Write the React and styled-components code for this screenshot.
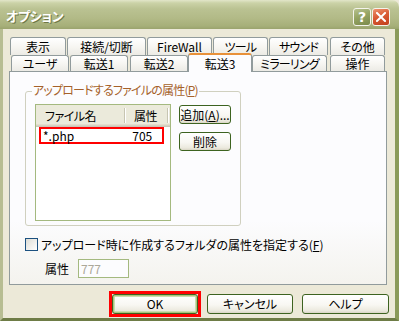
import React from 'react';
import styled, { createGlobalStyle } from 'styled-components';

const Global = createGlobalStyle`
  html, body { margin: 0; padding: 0; background: #ECE9D8; }
  * { box-sizing: border-box; }
`;

const FONT = `"Noto Sans CJK JP", "Noto Sans", sans-serif`;

const Window = styled.div`
  width: 399px;
  height: 321px;
  display: flex;
  flex-direction: column;
  overflow: hidden;
  background: #ECE9D8;
  font-family: ${FONT};
  font-size: 12px;
  line-height: 14px;
  color: #000;
  font-feature-settings: "palt" 1;
`;

const TitleBar = styled.div`
  flex: none;
  height: 29px;
  display: flex;
  align-items: center;
  padding: 0 9px 0 6px;
  border-radius: 0 7px 0 0;
  background: linear-gradient(180deg, #e2e6c9 0px, #cbd2a7 3px, #bac292 9px, #b2ba87 18px, #a6af79 26px, #9aa36d 29px);
`;

const TitleText = styled.span`
  flex: 1;
  margin-top: 2px;
  font-size: 13px;
  font-weight: bold;
  line-height: 16px;
  color: #fff;
  letter-spacing: -0.3px;
  text-shadow: 1px 1px 0 #6d7746;
`;

const CaptionButtons = styled.div`
  display: flex;
  gap: 1px;
  margin-top: 4px;
`;

const CaptionButton = styled.div`
  width: 18px;
  height: 18px;
  display: flex;
  align-items: center;
  justify-content: center;
  border: 1px solid #f4f4ec;
  border-radius: 3px;
  color: #fff;
  font-family: "DejaVu Sans", sans-serif;
  font-weight: bold;
  font-size: 14px;
  line-height: 14px;
  background: ${p => p.$close
    ? 'linear-gradient(160deg, #ee9470 0%, #d95b34 45%, #c2401d 100%)'
    : 'linear-gradient(160deg, #b7c28e 0%, #95a463 45%, #7b8a4b 100%)'};
`;

const Frame = styled.div`
  flex: 1;
  min-height: 0;
  display: flex;
  flex-direction: column;
  border-left: 3px solid #b7bd92;
  border-right: 4px solid #8a9a5a;
  border-bottom: 3px solid #6e7c46;
  background: #ECE9D8;
  padding: 8px 0 0 6px;
`;

const TabArea = styled.div`
  display: flex;
  flex-direction: column;
  margin-left: 1px;
`;

const TabRow = styled.div`
  display: flex;
  align-items: flex-end;
  height: ${p => p.$h}px;
  padding-left: ${p => p.$pl || 0}px;
`;

const Tab = styled.div`
  flex: none;
  width: ${p => p.$w}px;
  margin-left: ${p => p.$ml || 0}px;
  height: ${p => (p.$active ? '19px' : '100%')};
  margin-bottom: ${p => (p.$active ? '-1px' : '0')};
  position: ${p => (p.$active ? 'relative' : 'static')};
  z-index: ${p => (p.$active ? 2 : 'auto')};
  display: flex;
  align-items: center;
  justify-content: center;
  border: 1px solid #919B9C;
  border-bottom: none;
  border-top: ${p => (p.$active ? '2px solid #E8913A' : '1px solid #919B9C')};
  border-radius: 3px 3px 0 0;
  background: ${p => (p.$active ? '#FCFCFE' : 'linear-gradient(180deg, #ffffff 0%, #f7f6f2 50%, #ecebe5 100%)')};
  padding-top: ${p => (p.$active ? '0' : '1px')};
  letter-spacing: ${p => (p.$tight ? '-0.8px' : '0')};
  white-space: nowrap;
`;

const Panel = styled.div`
  width: 378px;
  height: 214px;
  flex: none;
  border: 1px solid #919B9C;
  background: linear-gradient(180deg, #FCFCFE 0%, #FCFCFE 70%, #F4F3EE 100%);
  display: flex;
  flex-direction: column;
  padding: 19px 0 0 15px;
`;

const Group = styled.div`
  position: relative;
  width: 216px;
  height: 135px;
  border: 1px solid #D0D0BF;
  border-radius: 3px;
  padding: 12px 9px 0 9px;
  display: flex;
  gap: 8px;
`;

const GroupCaption = styled.span`
  position: absolute;
  top: -9px;
  left: 6px;
  padding: 0 1px;
  background: #FCFCFE;
  color: #A5612A;
  letter-spacing: -0.8px;
  white-space: nowrap;
`;

const ListView = styled.div`
  width: 136px;
  height: 117px;
  flex: none;
  border: 1px solid #A4B97F;
  background: #fff;
  display: flex;
  flex-direction: column;
`;

const Header = styled.div`
  height: 22px;
  display: flex;
  align-items: center;
  background: #EBEADB;
  box-shadow: inset 0 -1px #CBC7B8, inset 0 -2px #D6D2C2, inset 0 -3px #E2DECD;
`;

const HeaderCell = styled.div`
  width: ${p => p.$w}px;
  padding-left: ${p => p.$pl}px;
  padding-bottom: 1px;
  letter-spacing: -0.5px;
  white-space: nowrap;
`;

const Divider = styled.span`
  width: 2px;
  height: 15px;
  border-left: 1px solid #C7C5B2;
  border-right: 1px solid #fff;
  margin-bottom: 1px;
`;

const Row = styled.div`
  display: flex;
  align-items: center;
  width: 125px;
  height: 17px;
  margin-left: 3px;
  border: 2px solid #ff0000;
  padding-left: 2px;
`;

const Cell = styled.span`
  width: ${p => p.$w}px;
  white-space: nowrap;
`;

const SideButtons = styled.div`
  display: flex;
  flex-direction: column;
  gap: 8px;
  margin-top: 1px;
`;

const Button = styled.button`
  flex: none;
  width: ${p => p.$w}px;
  height: ${p => p.$h}px;
  padding: 0;
  border: 1px solid #3d6320;
  border-radius: 3px;
  background: linear-gradient(180deg, #ffffff 0%, #f8f7f2 55%, #ebe9dd 88%, #d9d5c5 100%);
  font-family: ${FONT};
  font-size: 12px;
  line-height: 14px;
  font-feature-settings: "palt" 1;
  color: #000;
  white-space: nowrap;
  box-shadow: ${p => (p.$default ? 'inset 0 0 0 1px #a9c57c, inset 0 0 0 2px #cadcae' : 'none')};
`;

const Marked = styled.span`
  display: flex;
  flex: none;
  margin: -3px;
  border: 3px solid #ff0000;
`;

const CheckRow = styled.div`
  display: flex;
  align-items: center;
  gap: 3px;
  margin-top: 12px;
  height: 13px;
`;

const CheckBox = styled.span`
  width: 13px;
  height: 13px;
  flex: none;
  border: 1px solid #1C5180;
  background: linear-gradient(135deg, #dcdcd5 0%, #efeeea 50%, #ffffff 100%);
`;

const AttrRow = styled.div`
  display: flex;
  align-items: center;
  gap: 9px;
  margin-top: 8px;
  margin-left: 20px;
`;

const TextInput = styled.div`
  width: 51px;
  height: 19px;
  border: 1px solid #A4B97F;
  background: #FCFCFE;
  color: #ACA899;
  padding-left: 2px;
  display: flex;
  align-items: center;
`;

const ButtonRow = styled.div`
  display: flex;
  justify-content: flex-end;
  align-items: center;
  gap: 9px;
  margin-top: 9px;
  padding-right: 6px;
`;

const CloseIcon = () => (
  <svg width="10" height="10" viewBox="0 0 10 10">
    <path d="M1 1 L9 9 M9 1 L1 9" stroke="#fff" strokeWidth="2" strokeLinecap="square" />
  </svg>
);

const row1 = [
  { t: '表示', w: 56, ml: 0 },
  { t: '接続/切断', w: 79, ml: 1 },
  { t: 'FireWall', w: 65, ml: 1 },
  { t: 'ツール', w: 55, ml: 1, tight: true },
  { t: 'サウンド', w: 59, ml: 1, tight: true },
  { t: 'その他', w: 55, ml: 2 },
];

const row2 = [
  { t: 'ユーザ', w: 58, ml: 0 },
  { t: '転送1', w: 58, ml: 1 },
  { t: '転送2', w: 58, ml: 2 },
  { t: '転送3', w: 64, ml: 0, active: true },
  { t: 'ミラーリング', w: 75, ml: 0, tight: true },
  { t: '操作', w: 55, ml: 3 },
];

export default function App() {
  return (
    <Window>
      <Global />
      <TitleBar>
        <TitleText>オプション</TitleText>
        <CaptionButtons>
          <CaptionButton>?</CaptionButton>
          <CaptionButton $close><CloseIcon /></CaptionButton>
        </CaptionButtons>
      </TitleBar>
      <Frame>
        <TabArea>
          <TabRow $h={18}>
            {row1.map(t => (
              <Tab key={t.t} $w={t.w} $ml={t.ml} $tight={t.tight}>{t.t}</Tab>
            ))}
          </TabRow>
          <TabRow $h={16} $pl={1}>
            {row2.map(t => (
              <Tab key={t.t} $w={t.w} $ml={t.ml} $active={t.active} $tight={t.tight}>{t.t}</Tab>
            ))}
          </TabRow>
        </TabArea>
        <Panel>
          <Group>
            <GroupCaption>アップロードするファイルの属性(<u>P</u>)</GroupCaption>
            <ListView>
              <Header>
                <HeaderCell $w={88} $pl={9}>ファイル名</HeaderCell>
                <Divider />
                <HeaderCell $w={41} $pl={8}>属性</HeaderCell>
                <Divider />
              </Header>
              <Row>
                <Cell $w={90}>*.php</Cell>
                <Cell $w={30}>705</Cell>
              </Row>
            </ListView>
            <SideButtons>
              <Button $w={52} $h={19}>追加(<u>A</u>)...</Button>
              <Button $w={52} $h={19}>削除</Button>
            </SideButtons>
          </Group>
          <CheckRow>
            <CheckBox />
            <span>アップロード時に作成するフォルダの属性を指定する(<u>F</u>)</span>
          </CheckRow>
          <AttrRow>
            <span>属性</span>
            <TextInput>777</TextInput>
          </AttrRow>
        </Panel>
        <ButtonRow>
          <Marked>
            <Button $w={86} $h={20} $default>OK</Button>
          </Marked>
          <Button $w={86} $h={20}>キャンセル</Button>
          <Button $w={87} $h={20}>ヘルプ</Button>
        </ButtonRow>
      </Frame>
    </Window>
  );
}
